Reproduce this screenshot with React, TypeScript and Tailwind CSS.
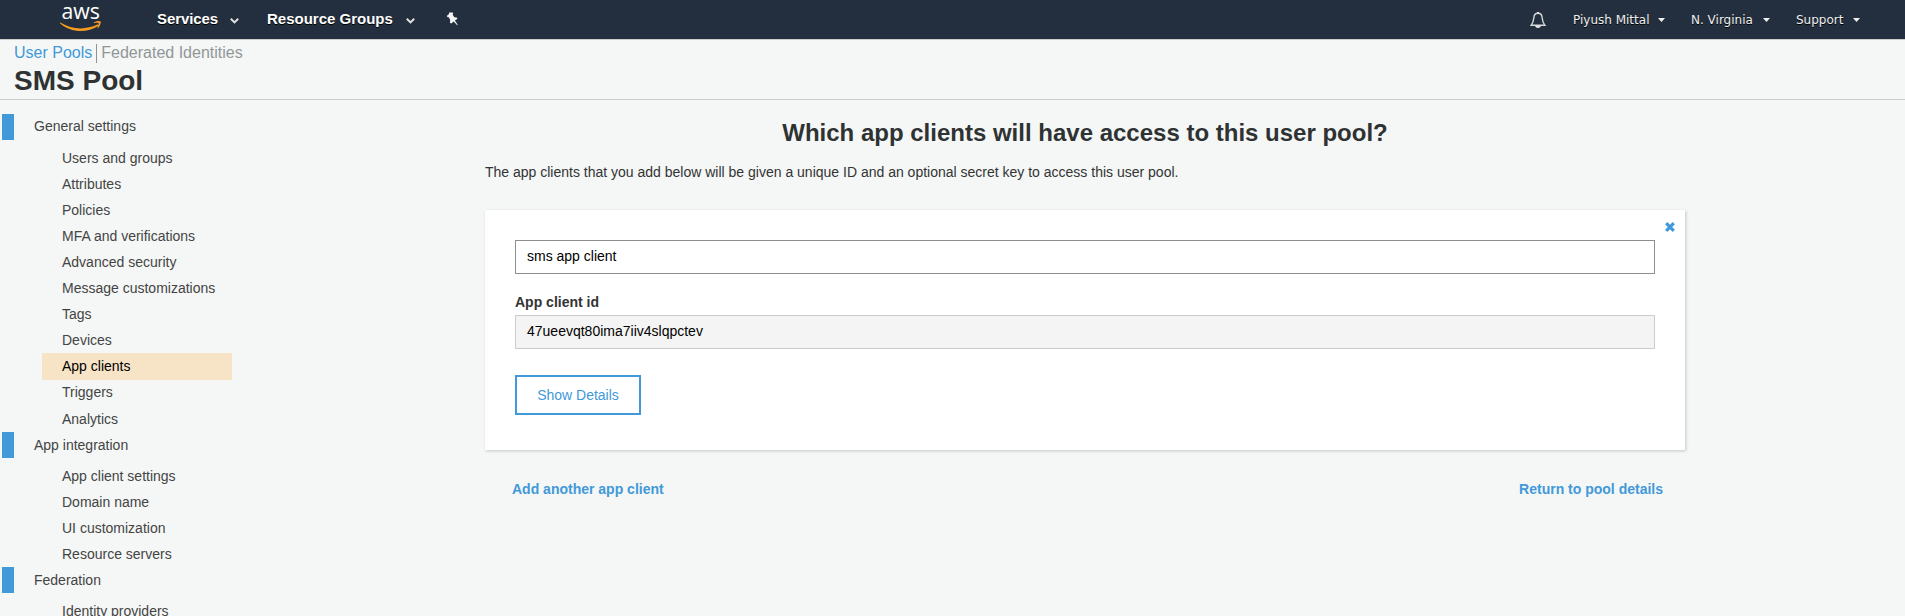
import React from "react";

const Chevron = ({ className = "" }: { className?: string }) => (
  <svg width="9" height="6" viewBox="0 0 9 6" className={className} fill="none" stroke="#e0e0e0" strokeWidth="2">
    <path d="M0.8 0.8 4.5 4.4 8.2 0.8" />
  </svg>
);

const Caret = ({ className = "" }: { className?: string }) => (
  <svg width="7" height="4" viewBox="0 0 7 4" className={className} fill="#f0f0f0">
    <path d="M0 0h7L3.5 4z" />
  </svg>
);

const AwsLogo = () => (
  <svg width="42" height="33" viewBox="0 0 42 33" className="block shrink-0 overflow-visible">
    <text x="1.5" y="19.4" fontFamily="Open Sans, sans-serif" fontSize="21.5" fontWeight="500" fill="#fff" textLength="38.5" lengthAdjust="spacingAndGlyphs">
      aws
    </text>
    <g transform="translate(0 5)" fill="#f79b20">
      <path d="M0.3 17.6C12 25 26 25 37.4 19.6 38.4 19.2 39.200 20.100 38 21.100 27 28.600 10 27.600 0.200 18.600-.2 18 0 17.400.3 17.600z" />
      <path d="M34 17.2C37 15.6 40.2 15.8 40.6 16.5 41 17.4 40.2 21.2 38 23.200 37.600 23.500 37.200 23.300 37.400 22.700 38.200 21 39 18.600 38.600 18.100 38.200 17.600 35.800 17.800 34.300 18 33.600 18 33.500 17.500 34 17.200z" />
    </g>
  </svg>
);

const Pin = () => (
  <svg width="13" height="14" viewBox="0 0 13 14" className="block shrink-0" fill="#f4f4f4">
    <path d="M3.200 0.600 6.900 0.500 7.100 2 6.500 2.500 8.300 5.200 10.700 5.400 11.500 6.800 8.900 8.600 11.700 12.800 11.200 13.200 7.700 9.400 5.200 11.400 3.900 10.800 4.200 8 2.800 5.200 1.700 5.300 0.700 4 2.800 2.200z" />
  </svg>
);

const Bell = () => (
  <svg width="16" height="18" viewBox="0 0 16 18" className="block shrink-0">
    <path d="M1.200 14.200C3.200 12 3.500 10 3.800 7 4 3.800 5.500 2.300 8 2.300S12 3.800 12.200 7C12.500 10 12.800 12 14.800 14.200z" fill="none" stroke="#d4d7db" strokeWidth="1.400" />
    <path d="M7 0.900h2v1.400H7zM5 14.600h6C10.500 16.400 9.400 17 8 17s-2.500-.6-3-2.400z" fill="#e4e4e4" />
  </svg>
);

const sections = [
  {
    title: "General settings",
    items: ["Users and groups", "Attributes", "Policies", "MFA and verifications", "Advanced security", "Message customizations", "Tags", "Devices", "App clients", "Triggers", "Analytics"],
  },
  { title: "App integration", items: ["App client settings", "Domain name", "UI customization", "Resource servers"] },
  { title: "Federation", items: ["Identity providers"] },
];

const itemClass = (name: string) => {
  if (name === "App clients") return "ml-[42px] flex h-[27px] w-[190px] items-center bg-[#f7e3c6] pb-[2px] pl-[20px] text-black";
  if (name === "Triggers") return "ml-[42px] flex h-[26px] items-center pb-[2px] pl-[20px]";
  return "ml-[42px] flex h-[26px] items-center pl-[20px]";
};

export default function App() {
  return (
    <div className="h-[616px] overflow-hidden bg-[#f4f7f6] font-['Liberation_Sans',Arial,sans-serif] text-sm text-[#444]">
      <header className="flex h-[39px] items-start bg-[#232f3e] text-white">
        <div className="ml-[60px] w-[42px]"><AwsLogo /></div>
        <nav className="ml-[55px] flex h-[38px] items-center text-[15px] font-bold [text-shadow:0_1px_0_#000]">
          <span className="w-[61px] tracking-[-0.1px]">Services</span>
          <Chevron className="ml-[12px] mt-[3px]" />
          <span className="ml-[28px] w-[126px]">Resource Groups</span>
          <Chevron className="ml-[13px] mt-[3px]" />
          <span className="ml-[31px]"><Pin /></span>
        </nav>
        <div className="ml-auto mr-[45px] flex h-[40px] items-center font-['DejaVu_Sans',Verdana,sans-serif] text-[12px] text-[#f0f0f0] [text-shadow:0_1px_0_#000]">
          <Bell />
          <span className="ml-[27px] w-[77px] whitespace-nowrap pt-[2px]">Piyush Mittal</span>
          <Caret className="ml-[8px]" />
          <span className="ml-[26px] w-[64px] whitespace-nowrap pt-[2px]">N. Virginia</span>
          <Caret className="ml-[8px]" />
          <span className="ml-[26px] w-[49px] whitespace-nowrap pt-[2px]">Support</span>
          <Caret className="ml-[8px]" />
        </div>
      </header>
      <div className="h-[61px] border-b border-t border-[#c8cccb] pl-[14px]">
        <div className="flex h-[25px] items-center pt-[1px] text-base">
          <a className="text-[#4299d9]">User Pools</a>
          <span className="ml-1 h-[19px] w-px bg-[#8d9292]" />
          <a className="ml-1 text-[#919696]">Federated Identities</a>
        </div>
        <h1 className="text-[28px] font-bold leading-[32px] text-[#2f3232]">SMS Pool</h1>
      </div>
      <div className="flex">
        <aside className="w-[485px] pt-[14px]">
          {sections.map((s, n) => (
            <section key={s.title}>
              <div className={n === 0 ? "ml-[2px] flex h-[26px] items-center border-l-[12px] border-[#4299d9] pb-[2px] pl-[20px]" : "ml-[2px] flex h-[26px] items-center border-l-[12px] border-[#4299d9] pl-[20px]"}>
                {s.title}
              </div>
              <ul className="pt-[5px]">
                {s.items.map((i) => (
                  <li key={i} className={itemClass(i)}>{i}</li>
                ))}
              </ul>
            </section>
          ))}
        </aside>
        <main className="w-[1200px] pt-[16px] text-[#333]">
          <h2 className="text-center text-[24px] font-bold leading-[34px] text-[#2f3232]">Which app clients will have access to this user pool?</h2>
          <p className="mt-[12px] leading-[20px]">The app clients that you add below will be given a unique ID and an optional secret key to access this user pool.</p>
          <div className="relative mt-[28px] h-[240px] bg-white px-[30px] pt-[30px] shadow-[1px_1px_3px_rgba(0,0,0,0.2)]">
            <svg width="10" height="10" viewBox="0 0 10 10" className="absolute right-[10.500px] top-[12px]" stroke="#4299d9" strokeWidth="3.200">
              <path d="M1.200 1.200 8.800 8.800M8.800 1.200 1.200 8.800" />
            </svg>
            <div className="flex h-[34px] items-center border border-[#8b8f8f] px-[11px] pb-[2px] text-black">sms app client</div>
            <div className="mt-[20px] h-[21px] font-bold leading-[17px] text-[#333]">App client id</div>
            <div className="flex h-[34px] items-center border border-[#ccc] bg-[#f4f4f4] px-[11px] pb-[2px] text-black">47ueevqt80ima7iiv4slqpctev</div>
            <button className="mt-[26px] block h-[40px] w-[126px] border-2 border-[#4299d9] text-[#4299d9]">Show Details</button>
          </div>
          <div className="flex justify-between pl-[27px] pr-[22px] pt-[29px] font-bold leading-[20px] text-[#4299d9]">
            <a>Add another app client</a>
            <a>Return to pool details</a>
          </div>
        </main>
      </div>
    </div>
  );
}
